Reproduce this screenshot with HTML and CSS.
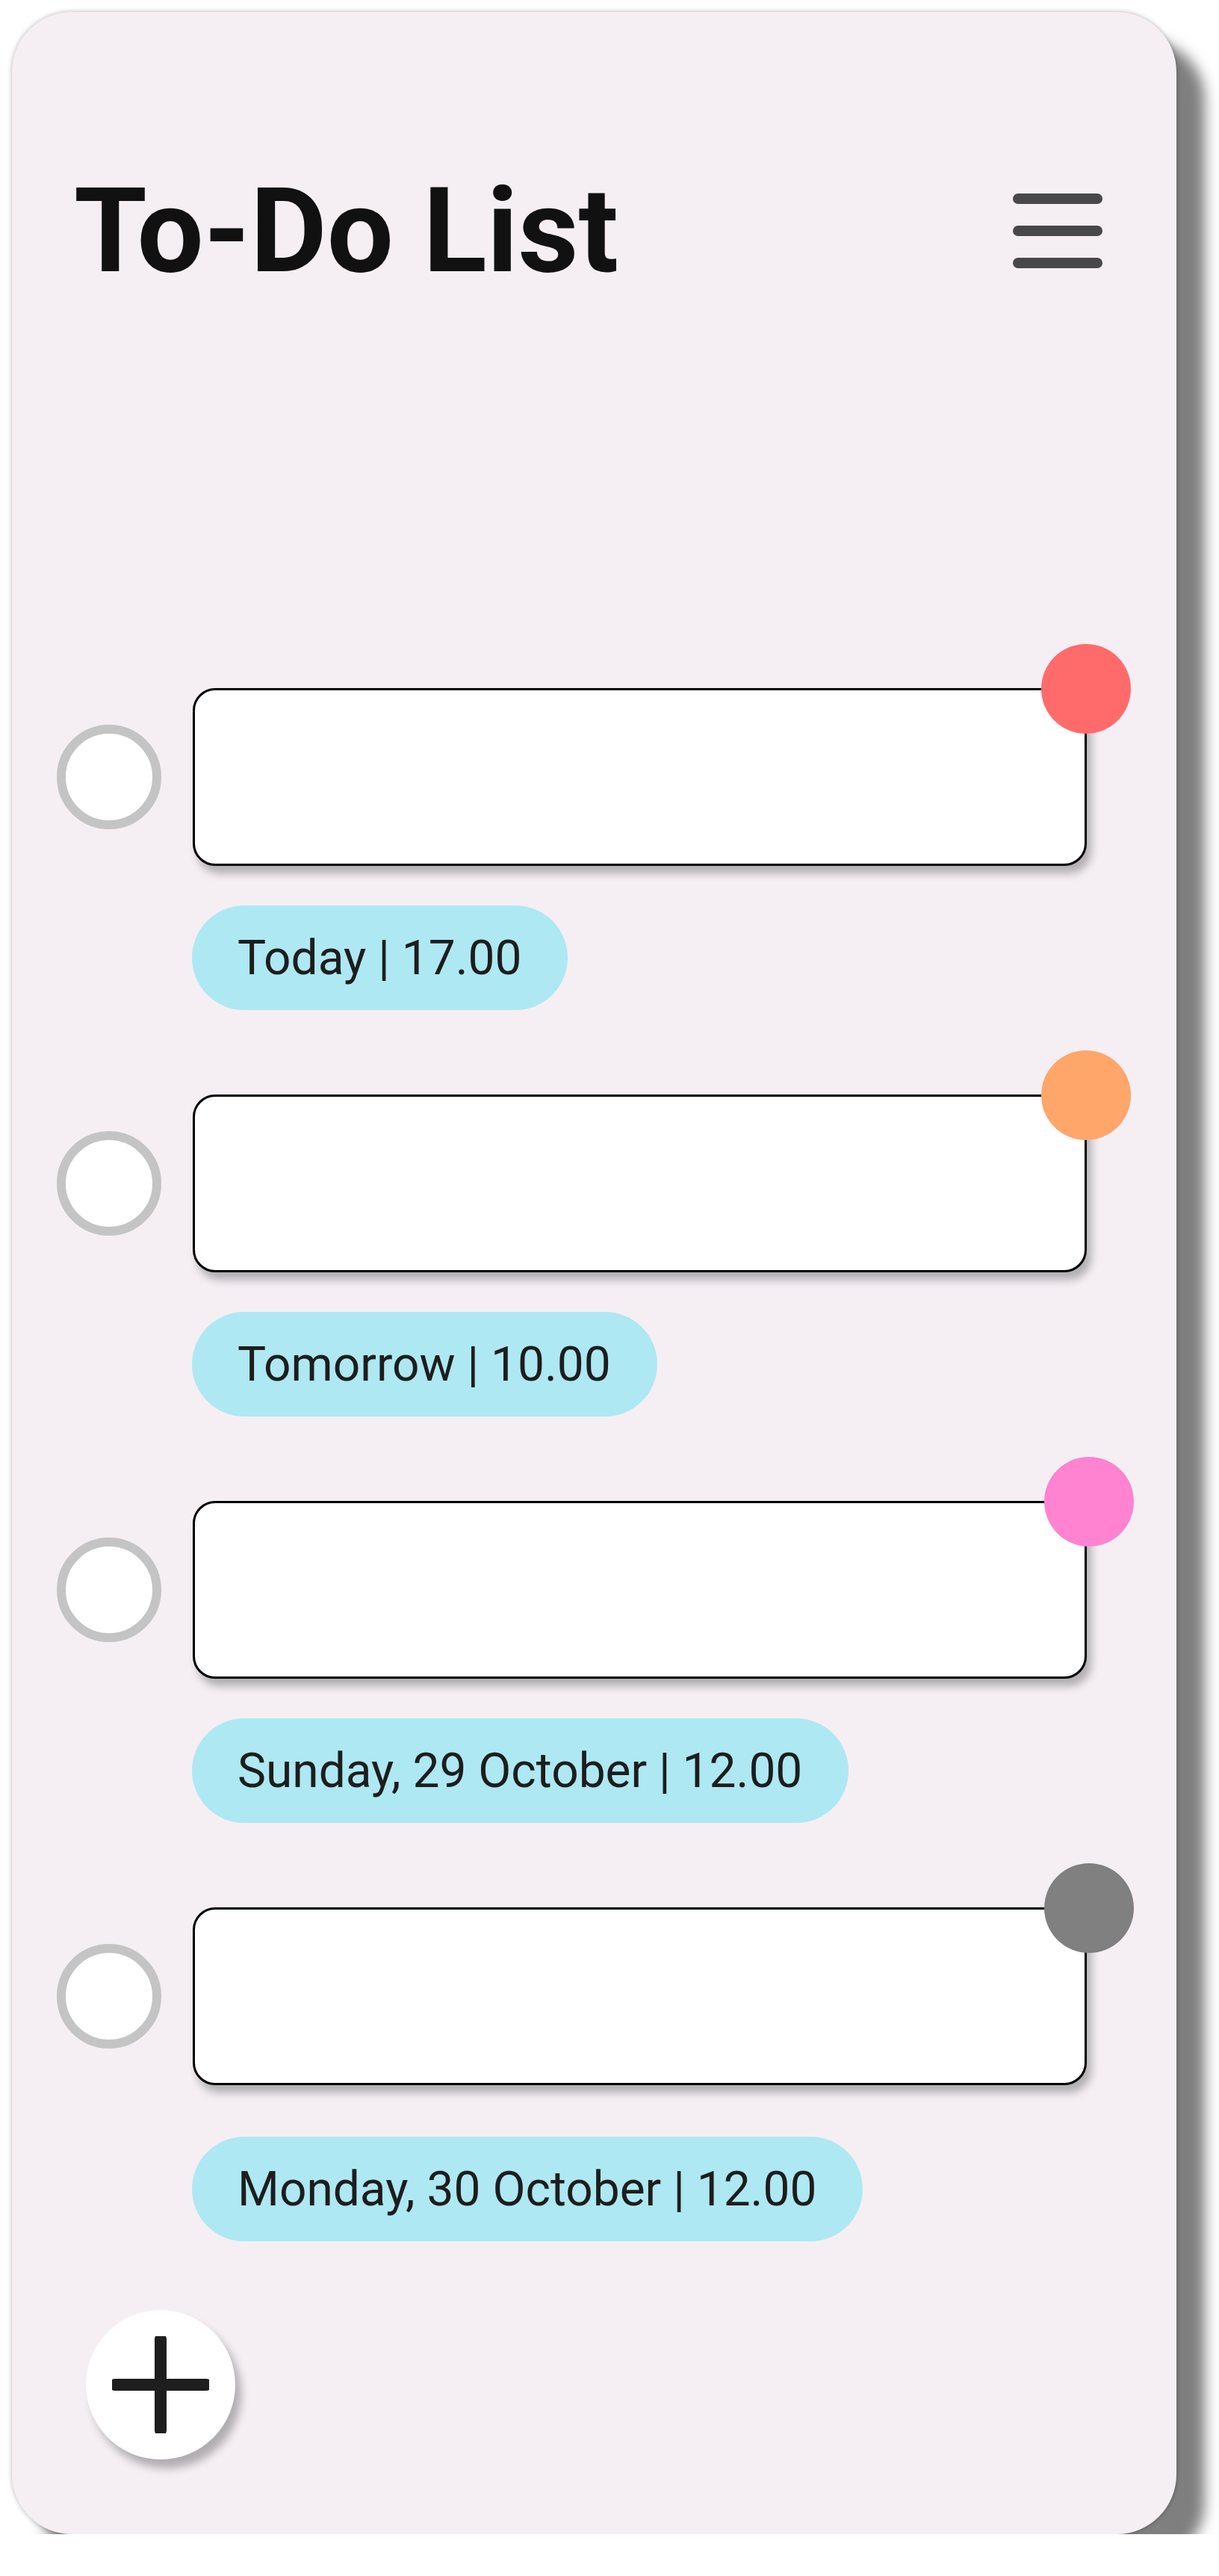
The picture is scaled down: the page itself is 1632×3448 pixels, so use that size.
FILE: index.html
```html
<!DOCTYPE html>
<html lang="en">
<head>
<meta charset="utf-8">
<title>To-Do List</title>
<link rel="stylesheet" href="styles.css">
</head>
<body>
<main class="card">
  <header class="header">
    <h1 class="title">To-Do List</h1>
    <button class="menu" aria-label="Menu">
      <span class="menu-bar"></span>
      <span class="menu-bar"></span>
      <span class="menu-bar"></span>
    </button>
  </header>

  <ul class="tasks">
    <li class="task">
      <div class="task-row">
        <span class="check"></span>
        <div class="task-box">
          <span class="dot dot-red"></span>
        </div>
      </div>
      <div class="date-pill">Today | 17.00</div>
    </li>
    <li class="task">
      <div class="task-row">
        <span class="check"></span>
        <div class="task-box">
          <span class="dot dot-orange"></span>
        </div>
      </div>
      <div class="date-pill">Tomorrow | 10.00</div>
    </li>
    <li class="task">
      <div class="task-row">
        <span class="check"></span>
        <div class="task-box">
          <span class="dot dot-pink dot-shift"></span>
        </div>
      </div>
      <div class="date-pill">Sunday, 29 October | 12.00</div>
    </li>
    <li class="task task-last">
      <div class="task-row">
        <span class="check"></span>
        <div class="task-box">
          <span class="dot dot-gray dot-shift"></span>
        </div>
      </div>
      <div class="date-pill">Monday, 30 October | 12.00</div>
    </li>
  </ul>

  <button class="fab" aria-label="Add task">
    <svg width="130" height="130" viewBox="0 0 130 130">
      <line x1="65" y1="4" x2="65" y2="126" stroke="#1e1e1e" stroke-width="16" stroke-linecap="round"/>
      <line x1="4" y1="65" x2="126" y2="65" stroke="#1e1e1e" stroke-width="16" stroke-linecap="round"/>
    </svg>
  </button>
</main>
</body>
</html>
```

FILE: styles.css
```css
* {
  box-sizing: border-box;
}

html, body {
  margin: 0;
  padding: 0;
  background: #ffffff;
}

body {
  font-family: Roboto, "Liberation Sans", Arial, sans-serif;
  color: #1d1d1d;
}

.card {
  margin: 16px 0 0 16px;
  width: 1559px;
  height: 3376px;
  background: #f5eff4;
  border-radius: 80px;
  box-shadow: 0 0 6px rgba(0, 0, 0, 0.3), 38px 38px 18px rgba(0, 0, 0, 0.5);
  display: flex;
  flex-direction: column;
  overflow: visible;
}

.header {
  display: flex;
  align-items: center;
  justify-content: space-between;
  padding: 213px 99px 0 83px;
}

.title {
  margin: 0;
  font-size: 158px;
  line-height: 160px;
  font-weight: 700;
  color: #111111;
  letter-spacing: 0;
}

.menu {
  width: 120px;
  height: 100px;
  padding: 0;
  border: 0;
  background: transparent;
  display: flex;
  flex-direction: column;
  justify-content: space-between;
}

.menu-bar {
  display: block;
  width: 120px;
  height: 14px;
  border-radius: 7px;
  background: #4a4749;
}

.tasks {
  list-style: none;
  margin: 532px 0 0 0;
  padding: 0 0 0 60px;
  display: flex;
  flex-direction: column;
  gap: 113px;
}

.task {
  display: flex;
  flex-direction: column;
  align-items: flex-start;
}

.task-row {
  display: flex;
  align-items: center;
  gap: 42px;
}

.check {
  width: 140px;
  height: 140px;
  border-radius: 50%;
  border: 12px solid #c4c4c4;
  background: #ffffff;
  flex: none;
}

.task-box {
  position: relative;
  width: 1197px;
  height: 238px;
  background: #ffffff;
  border: 3px solid #000000;
  border-radius: 30px;
  box-shadow: 6px 10px 12px rgba(0, 0, 0, 0.28);
}

.dot {
  position: absolute;
  width: 120px;
  height: 120px;
  border-radius: 50%;
  top: -62px;
  right: -62px;
}

.dot-shift {
  right: -66px;
}

.dot-red { background: #ff6b6b; }
.dot-orange { background: #ffa66b; }
.dot-pink { background: #ff83d1; }
.dot-gray { background: #808080; }

.date-pill {
  margin: 53px 0 0 181px;
  height: 140px;
  padding: 0 62px 0 61px;
  display: inline-flex;
  align-items: center;
  background: #aee8f3;
  border-radius: 70px;
  font-size: 64px;
  font-weight: 400;
  color: #1d1d1d;
  white-space: nowrap;
}

.task-last .date-pill {
  margin-top: 69px;
}

.fab {
  margin: 92px 0 0 99px;
  width: 200px;
  height: 200px;
  border-radius: 50%;
  border: 0;
  padding: 0;
  background: #ffffff;
  box-shadow: 8px 12px 12px rgba(0, 0, 0, 0.28);
  display: flex;
  align-items: center;
  justify-content: center;
}

.fab svg {
  display: block;
}
```
